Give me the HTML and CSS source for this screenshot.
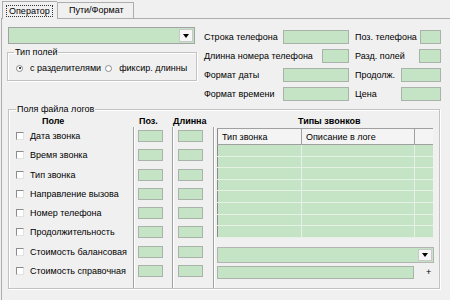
FILE: index.html
```html
<!DOCTYPE html>
<html lang="ru">
<head>
    <meta charset="UTF-8">
    <title>Оператор</title>
    <link rel="stylesheet" href="styles.css">
</head>
<body>
    <div class="tabs">
        <div class="tab active"><span class="focus">Оператор</span></div>
        <div class="tab">Пути/Формат</div>
    </div>

    <div class="page">
        <div class="top">
            <div class="left">
                <div class="combo combo-operator">
                    <div class="combo-field"></div>
                    <div class="combo-btn"><span class="arrow"></span></div>
                </div>
                <fieldset class="group group-type">
                    <legend>Тип полей</legend>
                    <div class="radios">
                        <label class="radio"><span class="dot checked"></span>с разделителями</label>
                        <label class="radio"><span class="dot"></span>фиксир. длинны</label>
                    </div>
                </fieldset>
            </div>

            <div class="fields">
                <div class="pair"><span>Строка телефона</span><input class="edit w66" type="text"></div>
                <div class="pair"><span>Поз. телефона</span><input class="edit w21" type="text"></div>
                <div class="pair"><span>Длинна номера телефона</span><input class="edit w27" type="text"></div>
                <div class="pair"><span>Разд. полей</span><input class="edit w22" type="text"></div>
                <div class="pair"><span>Формат даты</span><input class="edit w66" type="text"></div>
                <div class="pair"><span>Продолж.</span><input class="edit w40" type="text"></div>
                <div class="pair"><span>Формат времени</span><input class="edit w66" type="text"></div>
                <div class="pair"><span>Цена</span><input class="edit w40" type="text"></div>
            </div>
        </div>

        <fieldset class="group group-log">
            <legend>Поля файла логов</legend>
            <div class="columns">
                <div class="col col-name">
                    <div class="head">Поле</div>
                    <div class="body">
                        <label class="check"><span class="box"></span>Дата звонка</label>
                        <label class="check"><span class="box"></span>Время звонка</label>
                        <label class="check"><span class="box"></span>Тип звонка</label>
                        <label class="check"><span class="box"></span>Направление вызова</label>
                        <label class="check"><span class="box"></span>Номер телефона</label>
                        <label class="check"><span class="box"></span>Продолжительность</label>
                        <label class="check"><span class="box"></span>Стоимость балансовая</label>
                        <label class="check"><span class="box"></span>Стоимость справочная</label>
                    </div>
                </div>
                <div class="col col-pos">
                    <div class="head">Поз.</div>
                    <div class="body sep">
                        <input class="edit small" type="text">
                        <input class="edit small" type="text">
                        <input class="edit small" type="text">
                        <input class="edit small" type="text">
                        <input class="edit small" type="text">
                        <input class="edit small" type="text">
                        <input class="edit small" type="text">
                        <input class="edit small" type="text">
                    </div>
                </div>
                <div class="col col-len">
                    <div class="head">Длинна</div>
                    <div class="body sep">
                        <input class="edit small" type="text">
                        <input class="edit small" type="text">
                        <input class="edit small" type="text">
                        <input class="edit small" type="text">
                        <input class="edit small" type="text">
                        <input class="edit small" type="text">
                        <input class="edit small" type="text">
                        <input class="edit small" type="text">
                    </div>
                </div>
                <div class="col col-types">
                    <div class="head">Типы звонков</div>
                    <div class="body sep">
                        <table class="calls">
                            <colgroup>
                                <col class="c1"><col class="c2"><col>
                            </colgroup>
                            <thead>
                                <tr><th>Тип звонка</th><th>Описание в логе</th><th></th></tr>
                            </thead>
                            <tbody>
                                <tr><td></td><td></td><td></td></tr>
                                <tr><td></td><td></td><td></td></tr>
                                <tr><td></td><td></td><td></td></tr>
                                <tr><td></td><td></td><td></td></tr>
                                <tr><td></td><td></td><td></td></tr>
                                <tr><td></td><td></td><td></td></tr>
                                <tr><td></td><td></td><td></td></tr>
                                <tr><td></td><td></td><td></td></tr>
                            </tbody>
                        </table>
                        <div class="combo combo-type">
                            <div class="combo-field"></div>
                            <div class="combo-btn"><span class="arrow"></span></div>
                        </div>
                        <div class="add-row">
                            <input class="edit w197" type="text">
                            <span class="plus">+</span>
                        </div>
                    </div>
                </div>
            </div>
        </fieldset>
    </div>
</body>
</html>
```

FILE: styles.css
```css
:root {
    --bg: #f0f0f0;
    --green: #c5e3c5;
    --edit-border: #aab3aa;
    --frame: #adadad;
    --group: #c2c2c2;
}

body {
    margin: 0;
    background: var(--bg);
    font-family: "Liberation Sans", Arial, sans-serif;
    font-size: 9px;
    color: #000;
    overflow: hidden;
}

/* Вкладки */
.tabs {
    display: flex;
    align-items: flex-end;
    height: 18px;
    padding-left: 2px;
    box-sizing: border-box;
}

.tab {
    box-sizing: border-box;
    height: 16px;
    width: 77px;
    padding-left: 11px;
    line-height: 15px;
    border: 1px solid var(--frame);
    border-bottom: none;
    background: var(--bg);
}

.tab.active {
    width: 55px;
    height: 18px;
    padding: 2px 0 0 3px;
    margin-bottom: -1px;
    position: relative;
    border-right: none;
}

.focus {
    display: inline-block;
    border: 1px dotted #333;
    padding: 0 2px;
    line-height: 10px;
}

.page {
    width: 470px;
    margin-left: 1px;
    border-top: 1px solid var(--frame);
    border-left: 1px solid var(--frame);
    padding-left: 5px;
    height: 290px;
    box-sizing: border-box;
}

/* Верхняя часть */
.top {
    display: flex;
    align-items: flex-start;
    gap: 7px;
}

.left {
    width: 190px;
    padding-top: 8px;
}

.combo {
    display: flex;
    box-sizing: border-box;
    border: 1px solid #a2a2a2;
    background: var(--green);
    padding: 1px;
}

.combo-operator {
    margin-left: 1px;
    width: 187px;
    height: 17px;
}

.combo-field {
    flex: 1;
}

.combo-btn {
    width: 12px;
    background: #f6f6f6;
    border: 1px solid #c8c8c8;
    display: flex;
    align-items: center;
    justify-content: center;
}

.arrow {
    width: 0;
    height: 0;
    border-left: 3px solid transparent;
    border-right: 3px solid transparent;
    border-top: 4px solid #000;
}

.group {
    margin: 0;
    padding: 0;
    border: 1px solid var(--group);
    box-shadow: inset 1px 1px 0 #fff, 1px 1px 0 #fff;
}

.group legend {
    margin-left: 6px;
    padding: 0 1px;
    line-height: 11px;
}

.group-type {
    margin-top: 3px;
    height: 34px;
    box-sizing: border-box;
}

.radios {
    display: flex;
    padding: 4px 0 0 8px;
    gap: 4px;
}

.radio {
    display: flex;
    align-items: center;
    gap: 7px;
    line-height: 12px;
}

.dot {
    width: 7px;
    height: 7px;
    box-sizing: border-box;
    border-radius: 50%;
    border: 1px solid #8a8a8a;
    background: #fff;
    position: relative;
}

.dot.checked::after {
    content: "";
    position: absolute;
    left: 1.5px;
    top: 1.5px;
    width: 2px;
    height: 2px;
    border-radius: 50%;
    background: #000;
}

.fields {
    margin-top: 11px;
    display: grid;
    grid-template-columns: 145px 86px;
    grid-auto-rows: 14px;
    column-gap: 6px;
    row-gap: 5px;
}

.pair {
    display: flex;
    justify-content: space-between;
    align-items: center;
}

.edit {
    box-sizing: border-box;
    margin: 0;
    padding: 0;
    height: 14px;
    border: 1px solid var(--edit-border);
    background: var(--green);
    font: inherit;
}

.w66 { width: 66px; }
.w21 { width: 21px; }
.w22 { width: 22px; }
.w27 { width: 27px; }
.w40 { width: 40px; }
.w197 { width: 197px; height: 13px; }

/* Поля файла логов */
.group-log {
    margin: 3px 0 0 1px;
    width: 432px;
    height: 185px;
    box-sizing: border-box;
}

.group-log legend {
    margin-left: 7px;
}

.columns {
    display: flex;
    height: 172px;
    padding-top: 1px;
}

.col {
    display: flex;
    flex-direction: column;
}

.head {
    font-weight: bold;
    line-height: 11px;
    height: 11px;
    white-space: nowrap;
}

.body {
    flex: 1;
    display: flex;
    flex-direction: column;
}

.sep {
    border-left: 1px solid #a0a0a0;
    box-shadow: inset 1px 0 0 #fff;
}

.col-name { width: 124px; }
.col-name .head { padding-left: 33px; }
.col-name .body {
    padding: 3px 0 0 7px;
    gap: 7.3px;
}

.check {
    display: flex;
    align-items: center;
    gap: 6px;
    height: 12px;
    white-space: nowrap;
}

.box {
    width: 8px;
    height: 8px;
    box-sizing: border-box;
    background: #fff;
    border-top: 1px solid #8c8c8c;
    border-left: 1px solid #8c8c8c;
    border-right: 1px solid #e2e2e2;
    border-bottom: 1px solid #e2e2e2;
}

.col-pos { width: 39px; }
.col-pos .head { padding-left: 6px; }
.col-pos .body { padding: 3px 0 0 4px; gap: 7.3px; }

.col-len { width: 41px; }
.col-len .head { padding-left: 1px; }
.col-len .body { padding: 3px 0 0 5px; gap: 7.3px; }

.small {
    width: 25px;
    height: 12px;
}

.col-types { flex: 1; }
.col-types .head { padding-left: 85px; }
.col-types .body { padding: 1px 0 0 3px; }

.calls {
    width: 216px;
    table-layout: fixed;
    border-collapse: collapse;
    border-left: 1px solid #8a8a8a;
    border-top: 1px solid #a0a0a0;
}

.calls .c1 { width: 84px; }
.calls .c2 { width: 113px; }

.calls th {
    height: 15px;
    padding: 0 0 0 4px;
    text-align: left;
    font-weight: normal;
    background: #f4f4f4;
    border-right: 1px solid #a0a0a0;
    border-bottom: 1px solid #a0a0a0;
}

.calls th:last-child {
    border-right: none;
}

.calls td {
    height: 10.6px;
    padding: 0;
    background: var(--green);
    border-right: 1px solid #e4f1e4;
    border-bottom: 1px solid #e4f1e4;
}

.calls td:last-child {
    border-right: none;
}

.combo-type {
    margin-top: 9px;
    width: 217px;
    height: 16px;
    border-color: #b4b4b4;
}

.add-row {
    display: flex;
    align-items: center;
    margin-top: 3px;
}

.plus {
    margin-left: 12px;
    font-size: 9px;
    line-height: 9px;
}
```
